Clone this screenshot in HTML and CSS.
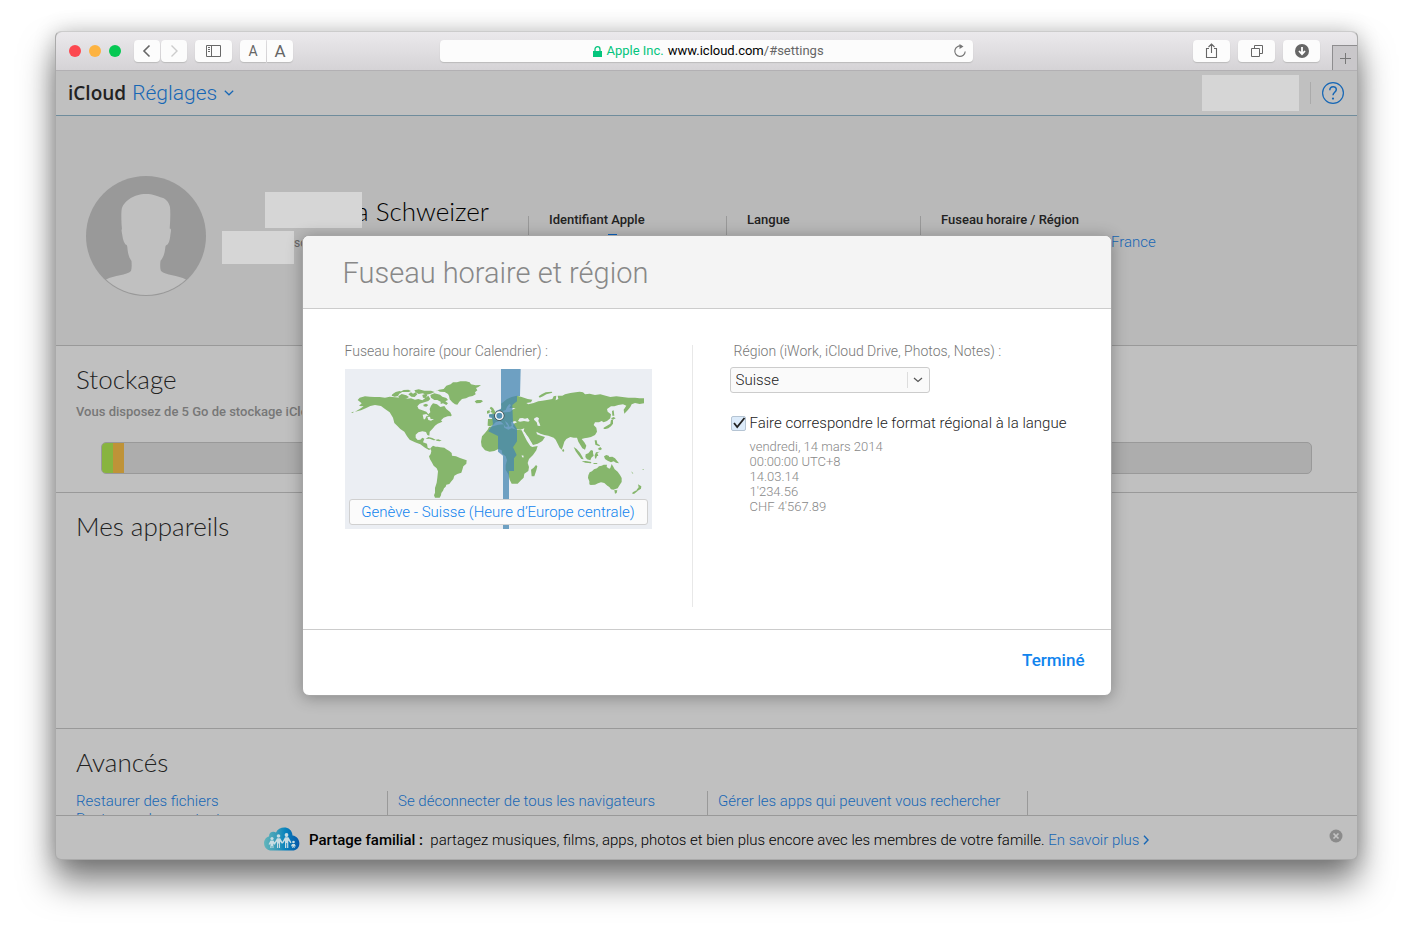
FILE: index.html
```html
<!DOCTYPE html>
<html lang="fr">
<head>
<meta charset="utf-8">
<meta name="viewport" content="width=device-width, initial-scale=1">
<title>iCloud Réglages</title>
<link rel="stylesheet" href="styles.css">
</head>
<body>
<div class="window">
  <header class="toolbar">
    <div class="tools">
      <div class="lights"><span class="light red"></span><span class="light amber"></span><span class="light green"></span></div>
      <div class="pair">
        <button class="tool small" aria-label="Précédent"><svg width="26" height="22" viewBox="0 0 26 22"><path d="M15.500 5.500 10 11l5.500 5.500" fill="none" stroke="#666" stroke-width="1.600"/></svg></button>
        <button class="tool small" aria-label="Suivant"><svg width="26" height="22" viewBox="0 0 26 22"><path d="M10.500 5.500 16 11l-5.500 5.500" fill="none" stroke="#ccc" stroke-width="1.400"/></svg></button>
      </div>
      <button class="tool" aria-label="Barre latérale"><svg width="37" height="22" viewBox="0 0 37 22"><path d="M11.500 5.500h14v11h-14zM16.500 5.500v11M13 7.500h2M13 9.500h2M13 11.500h2" fill="none" stroke="#686868"/></svg></button>
      <div class="pair joined">
        <button class="tool small letter" aria-label="Réduire le texte">A</button>
        <button class="tool small letter big" aria-label="Agrandir le texte">A</button>
      </div>
    </div>
    <div class="address">
      <button class="url"><svg width="9" height="11" viewBox="0 0 9 11"><path d="M0 5h9v6H0z" fill="#04c57d"/><path d="M2 5.500V3.200a2.500 2.500 0 0 1 5 0v2.300" fill="none" stroke="#04c57d" stroke-width="1.300"/></svg><span class="owner">Apple Inc.</span><span>www.icloud.com<span class="path">/#settings</span></span></button>
      <button class="reload" aria-label="Recharger"><svg width="14" height="14" viewBox="0 0 14 14"><path d="M8.500 2.200A5.200 5.200 0 1 0 12.200 7.500" fill="none" stroke="#777" stroke-width="1.200"/><path d="M6.500 0 10.500 2.500 6.500 5z" fill="#777"/></svg></button>
    </div>
    <div class="tools end">
      <button class="tool" aria-label="Partager"><svg width="37" height="22" viewBox="0 0 37 22"><path d="M16 8.500h-2.500v9h10v-9H21M18.500 13V4M15.500 7l3-3 3 3" fill="none" stroke="#666" stroke-width="1.100"/></svg></button>
      <button class="tool" aria-label="Onglets"><svg width="37" height="22" viewBox="0 0 37 22"><path d="M13.500 8.500h8v8h-8zM16.500 8V5.500h8v8H22" fill="none" stroke="#666"/></svg></button>
      <button class="tool" aria-label="Téléchargements"><svg width="37" height="22" viewBox="0 0 37 22"><circle cx="19" cy="11" r="7" fill="#666"/><path d="M19 7v7M16 11l3 3.200 3-3.200" fill="none" stroke="#fff" stroke-width="1.800"/></svg></button>
      <button class="newtab" aria-label="Nouvel onglet"><svg width="11" height="11" viewBox="0 0 11 11"><path d="M5.500 0v11M0 5.500h11" stroke="#777"/></svg></button>
    </div>
  </header>

  <nav class="appbar">
    <span class="brand">iCloud</span>
    <a class="app" href="#settings">Réglages <svg width="10" height="6" viewBox="0 0 10 6"><path d="m.8.800 4.200 4 4.200-4" fill="none" stroke="#1767b5" stroke-width="1.200"/></svg></a>
    <span class="account"></span>
    <a class="help" href="#help" aria-label="Aide"><svg width="22" height="22" viewBox="0 0 22 22"><circle cx="11" cy="11" r="10.400" fill="none" stroke="#1767b5" stroke-width="1.200"/><path d="M7.800 8.200c0-4.700 6.700-4.500 6.500-.6-.1 2.600-3.300 2.800-3.300 5.700" fill="none" stroke="#1767b5" stroke-width="1.500"/><circle cx="11" cy="16.600" r="1.100" fill="#1767b5"/></svg></a>
  </nav>

  <main class="page">
    <section class="profile">
      <svg class="avatar" width="120" height="120" viewBox="0 0 120 120"><defs><clipPath id="round"><circle cx="60" cy="60" r="59"/></clipPath></defs><circle cx="60" cy="60" r="60" fill="#999"/><path clip-path="url(#round)" d="M36 53.500c-.8-8-.9-17-.2-21 1.500-5 5.500-8 9-10.500C49 20 53 18 60 18s11 2 14.500 3.300C79 22 83 26 84 31c.6 6 .3 14-.3 21.500 1.500.2 1.500 1.500 1 4-.6 5-1.200 10-3.200 12-1.500.7-2 1-2.200 3-.5 5-1.500 9.500-4.800 13.200-.5 4-.5 8 .5 10.300 4.500 4.500 17 4 25 8.500V120H20v-16.500c8-4.500 21-4 25-8.500.8-2.500.8-6 .5-10-3-4-3.800-9-4.200-14-.2-2-.8-2.200-2-2.800-2.300-3-2.600-7-3.500-12-.4-2-.4-3.500.2-2.700Z" fill="#c0c0c0"/></svg>
      <div class="who">
        <h1 class="name">a Schweizer</h1>
        <p class="mail">so</p>
      </div>
      <dl class="facts">
        <div class="fact id"><dt>Identifiant Apple</dt><dd><span class="dash"></span></dd></div>
        <div class="fact lang"><dt>Langue</dt></div>
        <div class="fact zone"><dt>Fuseau horaire / Région</dt><dd><a href="#zone">France</a></dd></div>
      </dl>
    </section>
    <section class="block storage">
      <h2>Stockage</h2>
      <p class="note">Vous disposez de 5 Go de stockage iCloud.</p>
      <div class="meter"><span class="photos"></span><span class="backup"></span></div>
    </section>
    <section class="block devices"><h2>Mes appareils</h2></section>
    <section class="block advanced">
      <h2>Avancés</h2>
      <div class="links">
        <div><a href="#files">Restaurer des fichiers</a><a href="#contacts">Restaurer des contacts</a></div>
        <div><a href="#logout">Se déconnecter de tous les navigateurs</a></div>
        <div><a href="#apps">Gérer les apps qui peuvent vous rechercher</a></div>
      </div>
    </section>
  </main>

  <footer class="promo">
    <svg width="36" height="24" viewBox="0 0 36 24"><defs><linearGradient id="sky" x1="0" x2="1"><stop offset="0" stop-color="#62b5bb"/><stop offset=".38" stop-color="#3599b8"/><stop offset=".6" stop-color="#0783bd"/><stop offset="1" stop-color="#0757a8"/></linearGradient></defs><path d="M8 23.500c-10 0-10-12.500-3-14C5 5 9 4 12 5.500 15-1.500 28-1.500 28.500 8.500c9 1 9.500 15-.5 15Z" fill="url(#sky)"/><g fill="#c9dde3"><circle cx="8" cy="11.500" r="1.600"/><circle cx="14.500" cy="9" r="1.800"/><circle cx="22.500" cy="8" r="1.900"/><circle cx="29.500" cy="15" r="1.300"/><path d="M6.500 13.500h3l2 3.500-1.200.7-1-1.200.2 4.500H8.500v-2h-1v2H6.300l.2-4.500-.8 1.200-1.200-.5ZM13 11.300h3.200l2.800 4.700-1 .7-2-2.200V21h-1v-4.500h-.8V21h-1.200v-6.500l-2 2.500-.9-.7ZM21 10.300h3.500l3 5.200-1 .7-2.200-2.700V21h-1.200v-5h-.8v5H21v-7.500l-1.900 2.700-1-.7ZM28 17h2.800l1 2.200-.8.4-.6-.8.3 2.200h-.8l-.4-1.500-.5 1.500h-.8l.3-2.200-.8.700-.7-.5Z"/></g></svg>
    <p><strong>Partage familial :</strong>&nbsp; partagez musiques, films, apps, photos et bien plus encore avec les membres de votre famille. <a href="#family">En savoir plus <svg width="6" height="10" viewBox="0 0 6 10"><path d="m1 .8 4 4.200-4 4.200" fill="none" stroke="#1767b5" stroke-width="1.400"/></svg></a></p>
    <button class="dismiss" aria-label="Fermer"><svg width="14" height="14" viewBox="0 0 14 14"><circle cx="7" cy="7" r="6.500" fill="#8b8b8b"/><path d="m4.500 4.500 5 5m0-5-5 5" stroke="#c4c4c4" stroke-width="1.700"/></svg></button>
  </footer>

  <div class="modal" role="dialog" aria-labelledby="dialog-title">
    <div class="modal-head"><h2 id="dialog-title">Fuseau horaire et région</h2></div>
    <div class="modal-body">
      <div class="timezone">
        <p class="label">Fuseau horaire (pour Calendrier) :</p>
        <div class="map">
          <svg viewBox="30 102 921 480" role="img" aria-label="Carte du monde">
            <g fill="#86b66c">
              <path d="M68 195 74 188 90 184 104 185 118 186 134 186 150 188 164 185 180 187 195 188 205 186 215 191 228 190 240 194 250 192 262 196 272 188 280 182 286 192 280 198 268 202 254 206 247 214 251 222 262 226 274 230 280 238 286 232 284 222 288 212 294 205 306 208 316 216 328 213 334 222 346 232 350 242 338 244 326 248 318 256 322 260 308 266 300 272 294 280 284 290 283 302 277 300 273 291 262 289 250 292 242 299 242 308 248 315 256 314 262 308 268 311 264 322 276 326 278 338 288 342 282 345 270 338 256 328 240 322 224 314 216 304 208 290 196 282 188 274 178 264 174 248 164 232 150 222 138 213 120 210 106 213 92 220 78 226 60 230 74 222 86 214 72 213 80 205z"/>
              <path d="M48 232l8-2-2 4zM172 178l10-7 12-3 7 4-8 4-4 7-10 2-9-3zM190 184l10-7 14 4 8 5-8 5-10-2-12 0zM196 170l10-5 14-1 8 4-6 3-10 0zM220 178l8-6 6 4 8-4 5 6-8 8-10-1zM238 166l13-3 17 4 20 0 11 4-12 5-13 3-11-4-12 2-9-5zM262 180l10-4 5 5-5 8-8-1zM286 180l12-5 17 4 7 6 12 4 5 6-8 4 8 6-5 5-10-5-7 2 0-7-10-5-9 0-10-7zM265 209l8-3 7 4-6 5-8-1zM332 240l10-7 7 5-1 6-9-1z"/>
              <path d="M303 169l9-5 14-2 8-10 13-4 7-6 12 0 10-3 17 0 11 3 4 6 14 3 16-1-8 6-7 3 4 7-7 6 2 6-9 5-11 2-9 5-12 2-8 8-6 9-7-1-8-6-8-9-2-10-3-6-10-6-14-1-8-4zM419 199l7-4 13 0 5 4-8 5-12 1z"/>
              <path d="M272 312l8-6 12 3 11 6-7 1-12-5zM303 314l7-1 10 4-7 2-9-2zM286 340l8-8 8 3 6 0 8 2 12 1 6 5 9 5 7 6 1 8 12 2 12 5 20 7-1 10-9 8-3 10-3 9-12 4-9 5-3 10-7 8-5 7-9 2-2 6-5 5-3 7-5 7-1 7-4 7h-14l-3-7 3-8 0-14 5-16 2-15 2-19-4-9-9-8-6-11-5-8-3-9 5-7 2-9z"/>
              <path d="M468 238 474 234 466 231 470 226 464 220 468 215 474 219 480 229 484 236zM456 228 464 225 464 234 456 236z"/>
              <path d="M458 268 459 252 471 252 472 246 462 242 466 238 478 238 486 230 496 226 500 216 498 206 506 200 516 192 530 186 546 182 560 186 578 192 592 194 588 202 574 204 580 208 596 204 610 199 622 197 640 194 652 192 656 184 664 182 662 196 670 192 668 182 682 182 690 178 706 174 722 172 734 170 744 172 750 178 764 176 780 180 796 178 812 182 826 186 844 184 862 186 880 188 900 188 914 190 927 190 927 205 914 207 900 204 890 208 886 216 878 226 868 236 866 224 874 212 864 208 850 210 838 214 828 214 816 222 818 230 828 238 826 250 816 258 806 262 800 258 792 262 780 262 776 270 784 278 786 290 780 300 768 306 758 308 748 310 740 312 748 322 754 332 750 344 742 340 736 330 730 320 726 308 716 308 706 306 694 312 688 320 684 334 680 344 674 338 668 326 662 314 656 308 650 306 640 302 628 300 616 296 604 290 606 298 618 302 630 306 622 318 608 326 594 330 588 320 580 306 570 294 566 288 568 280 556 284 540 282 534 274 536 266 546 262 540 258 528 262 530 272 524 276 518 264 510 258 514 268 520 274 512 276 502 264 494 258 482 262 474 270 466 274 458 272z"/>
              <path d="M462 276 474 274 490 269 506 268 508 278 520 284 530 280 546 284 560 286 568 302 576 318 586 333 592 336 608 333 604 346 594 360 582 372 578 384 582 396 580 408 568 416 566 428 558 436 548 446 530 446 524 434 520 418 512 404 512 390 516 376 512 364 502 356 500 346 490 342 478 348 464 350 450 346 440 334 438 320 441 304 450 294 458 284zM588 404 596 398 603 390 607 394 604 406 598 424 590 424z"/>
              <path d="M806 278 816 272 826 266 828 254 834 254 834 266 828 274 820 280 812 282 806 282zM828 250 836 246 842 250 834 254zM832 242 831 228 836 226 838 242zM611 184 620 178 632 172 650 170 652 173 634 178 624 184 614 188zM681 345 686 342 688 348 684 351z"/>
              <path d="M716 336l9 6 10 11 7 12 4 8-7-1-9-12-8-11zM740 379l12-1 17 3-1 4-17-2zM752 358l8-3 8-10 6 2 0 7 2 8-7 6-3 8-10-3-5-7zM776 384h12l-3 3-10 0zM779 361l4-9 12-2-8 4 3 9-4 0-3 8-3-1zM779 316l6 0 2 10 8 5-2 3-8-3-4-2zM788 342l8-6 5 6-6 4zM807 364l7-4 7 2 2 4 9-1 8 5 6 7 6 8-9-2-7-4-8 3-10-5-8-5z"/>
              <path d="M764 412l7-3 6-6 9-3 6-6 8-2 6-3 10 0-1 7 8 5 3-2 4-12 5 8 4 8 9 7 7 10 5 9 0 12-6 9-6 10-13 4-7-1-5-7-6-4-9-8-10-2-9 3-9 4-13 1-4-2 0-9-4-10 1-8zM838 465l9 1-2 8-5 2zM909 448l10 6-1 7-11 7-2-4 6-7zM893 472l13-7 2 3-10 8-6 1zM888 409l7 6-2 1zM921 403l5-1 0 3z"/>
            </g>
            <g fill="#ebeef3">
              <path d="M549 258l5-8 8-1 8 2 8-2 6 8-4 3-13-2-12 2zM598 250l8-4 6 4-2 8 4 8 2 7-8-1-3-10-8-8zM504 228l8-3 4-9 7-9 5 3-5 9 11 0 8 0-10 5-6 6-12 2-9 0zM564 290l5 0 8 15 14 21-4 4-9-13-8-14zM263 239l11-2 7 6-7 1-4 9-4 0zM277 246l8-1 2 7 10 0-9 5-8-2zM560 361l6 1-1 6-4-2z"/>
            </g>
            <path fill="#4486b2" fill-opacity=".75" d="M498 102h59l-2 81h-9v16l-14 11 2 52 12 20v37l-12 18 11 23-8 10v38h-15v174h-18V362l-15-12v-47l-29-14 14-21-2-18-10-3v-9l19-1 2-9 15-7z"/>
            <circle cx="493" cy="242" r="14" fill="none" stroke="#444" stroke-width="3"/><circle cx="493" cy="242" r="11" fill="#5590b2" stroke="#fff" stroke-width="4"/>
          </svg>
          <button class="place">Genève - Suisse (Heure d’Europe centrale)</button>
        </div>
      </div>
      <div class="divider"></div>
      <div class="region">
        <label class="label" for="region">Région (iWork, iCloud Drive, Photos, Notes) :</label>
        <div class="select"><select id="region"><option>Suisse</option></select><svg width="10" height="6" viewBox="0 0 10 6"><path d="m1 1 4 3.500L9 1" fill="none" stroke="#555" stroke-width="1.200"/></svg></div>
        <label class="check"><span class="box"><input type="checkbox" checked><svg width="15" height="15" viewBox="0 0 15 15"><path d="m3 7 3.200 4L13.500 2" fill="none" stroke="#222" stroke-width="1.800"/></svg></span><span>Faire correspondre le format régional à la langue</span></label>
        <ul class="samples"><li>vendredi, 14 mars 2014</li><li>00:00:00 UTC+8</li><li>14.03.14</li><li>1'234.56</li><li>CHF 4'567.89</li></ul>
      </div>
    </div>
    <div class="modal-foot"><button class="done">Terminé</button></div>
  </div>
</div>
</body>
</html>
```
FILE: styles.css
```css
* { box-sizing: border-box; }
body, h1, h2, p, dl, dt, dd, ul { margin: 0; padding: 0; }
body {
  background: #fff;
  font: 300 15px/18px Roboto, "Liberation Sans", sans-serif;
  color: #222;
}
button, select, input { font: inherit; color: inherit; margin: 0; padding: 0; border: 0; background: none; }
a { color: #1767b5; text-decoration: none; }
svg { display: block; }
ul { list-style: none; }

.window {
  position: relative;
  display: flex;
  flex-direction: column;
  height: calc(100vh - 110px);
  min-height: 620px;
  margin: 31px 55px 79px;
  border: 1px solid #aaa;
  border-top-color: #ccc;
  border-radius: 6px;
  background: #c0c0c0;
  box-shadow: 0 22px 34px rgba(0, 0, 0, .5), 0 0 22px rgba(0, 0, 0, .2);
}

.toolbar {
  flex: none;
  display: grid;
  grid-template-columns: 1fr 41% 1fr;
  align-items: center;
  height: 39px;
  border-bottom: 1px solid #b2b0b3;
  border-radius: 6px 6px 0 0;
  background: linear-gradient(#ebe9ec, #d5d3d6);
}
.tools { display: flex; align-items: center; gap: 8px; height: 100%; padding-left: 13px; }
.tools.end { justify-content: flex-end; padding: 0; }
.lights { display: flex; gap: 8px; margin-right: 5px; }
.light { width: 12px; height: 12px; border-radius: 50%; }
.red { background: #fc4850; }
.amber { background: #fdb341; }
.green { background: #06c853; }
.pair { display: flex; gap: 1px; }
.tool { width: 37px; height: 22px; border-radius: 4px; background: #fcfcfc; box-shadow: 0 1px 1px #bbb; color: #666; }
.tool.small { width: 26px; }
.letter { font-size: 14px; font-weight: 400; }
.letter.big { font-size: 17px; }
.joined .tool:first-child { border-radius: 4px 0 0 4px; }
.joined .tool:last-child { border-radius: 0 4px 4px 0; }
.address { display: flex; align-items: center; height: 22px; padding: 0 6px 0 24px; border-radius: 4px; background: #fcfcfc; box-shadow: 0 1px 1px #bbb; }
.url { flex: 1; display: flex; justify-content: center; align-items: center; gap: 4px; font: 400 13px/18px Roboto, sans-serif; color: #000; }
.owner { color: #04c57d; }
.path { color: #666; }
.newtab { align-self: flex-end; display: grid; place-items: center; width: 25px; height: 25px; margin-left: 4px; border: solid #8e8d8f; border-width: 1px 0 0 1px; background: #c9c7ca; }

.appbar { flex: none; display: flex; align-items: center; height: 45px; padding: 0 13px 0 12px; border-bottom: 1px solid #6f8c9c; }
.brand { font: 600 19px/24px "Open Sans", sans-serif; color: #222; }
.app { display: flex; align-items: center; gap: 7px; margin-left: 6px; font-size: 21px; line-height: 24px; }
.account { width: 97px; height: 36px; margin-left: auto; background: #d6d6d6; }
.help { margin-left: 11px; padding-left: 11px; border-left: 1px solid #aaa; }

.page { flex: 1; min-height: 0; overflow: hidden; }
.profile { display: flex; height: 230px; padding: 60px 30px 0; background: #b9b9b9; border-bottom: 1px solid #999; }
.avatar { flex: none; }
.who { position: relative; flex: none; width: 306px; margin-left: 16px; padding: 17px 0 0 72px; }
.name { padding-left: 62px; font: 300 26px/36px Lato, sans-serif; color: #000; }
.name::before, .mail::before { content: ""; position: absolute; background: #d6d6d6; }
.name::before { left: 43px; top: 16px; width: 97px; height: 36px; }
.mail { margin-top: 5px; font: 400 12px/18px Roboto, sans-serif; color: #666; }
.mail::before { left: 0; top: 55px; width: 72px; height: 33px; }
.facts { flex: 1; display: flex; padding-top: 40px; }
.fact { flex: none; height: 60px; padding-left: 20px; border-left: 1px solid #999; }
.fact.id { width: 198px; }
.fact.lang { width: 194px; }
.fact.zone { width: 300px; }
.fact dt { margin-top: -5px; font-weight: 500; font-size: 13px; line-height: 18px; }
.fact.zone dd { padding: 4px 0 0 170px; }
.dash { display: block; width: 9px; height: 2px; margin: 5px 0 0 59px; background: #0c63bf; }

.block { padding: 15px 20px 0; border-bottom: 1px solid #999; }
.block h2 { font: 300 26px/36px Lato, sans-serif; color: #222; }
.storage { height: 147px; }
.note { margin-top: 6px; font-size: 13px; font-weight: 500; color: #777; }
.meter { display: flex; height: 32px; margin: 21px 25px 0; border: 1px solid #999; border-radius: 5px; background: #adadad; overflow: hidden; }
.photos { width: 11px; background: #88b43f; }
.backup { width: 11px; background: #bf9338; }
.devices { height: 236px; }
.links { display: grid; grid-template-columns: 312px 320px 320px; margin-top: 11px; }
.links div { height: 60px; padding-left: 10px; border-right: 1px solid #999; }
.links div:first-child { padding-left: 0; }
.links a { display: block; line-height: 20px; }
.links a + a { line-height: 16px; }

.promo { flex: none; display: flex; align-items: center; justify-content: center; gap: 9px; position: relative; height: 44px; padding-top: 2px; border-top: 1px solid #999; color: #000; }
.promo p { padding-top: 2px; }
.promo a svg { display: inline-block; }
.promo strong { font-weight: 500; }
.dismiss { position: absolute; right: 14px; top: 13px; }

.modal {
  position: absolute;
  top: 203px;
  left: 50%;
  width: 810px;
  max-width: 100%;
  transform: translateX(-50%);
  border: 1px solid #a5a5a5;
  border-radius: 7px;
  background: #fff;
  box-shadow: 0 2px 16px rgba(0, 0, 0, .3);
}
.modal-head { padding: 19px 40px 17px; border-bottom: 1px solid #ccc; border-radius: 6px 6px 0 0; background: #f4f4f4; }
.modal-head h2 { font-weight: 300; font-size: 29px; line-height: 36px; color: #888; }
.modal-body { display: grid; grid-template-columns: 307px 1px 1fr; padding: 34px 20px 22px 42px; }
.label { font-size: 14px; line-height: 16px; color: #777; }
.map { position: relative; margin-top: 10px; background: #ebeef3; }
.map svg { width: 100%; }
.place { position: absolute; left: 4px; right: 4px; bottom: 4px; height: 26px; border: 1px solid #d0d0d0; border-radius: 3px; background: #fbfbfb; color: #1184ee; }
.divider { height: 262px; margin: 2px -40px 0 40px; background: #e8e8e8; }
.region { padding-left: 77px; }
.region > .label { display: block; margin-left: 4px; }
.select { display: grid; align-items: center; width: 200px; margin-top: 8px; }
.select > * { grid-area: 1 / 1; }
.select select { appearance: none; height: 26px; padding-left: 5px; border: 1px solid #ccc; border-radius: 3px; background: linear-gradient(#ddd, #ddd) 176px center / 1px 16px no-repeat #fafafa; }
.select svg { justify-self: end; margin-right: 7px; pointer-events: none; }
.check { display: flex; align-items: center; gap: 4px; margin: 21px 0 0 1px; }
.box { display: grid; }
.box > * { grid-area: 1 / 1; }
.box input { appearance: none; width: 15px; height: 15px; border: 1px solid #b5c4d3; border-radius: 2px; background: #dcebfa; }
.box svg { pointer-events: none; }
.samples { margin: 7px 0 0 20px; font-size: 13px; line-height: 15px; color: #888; }
.modal-foot { display: flex; justify-content: flex-end; padding: 20px 26px 25px; border-top: 1px solid #ccc; }
.done { font-weight: 500; font-size: 17px; line-height: 20px; color: #1184ee; }
```
